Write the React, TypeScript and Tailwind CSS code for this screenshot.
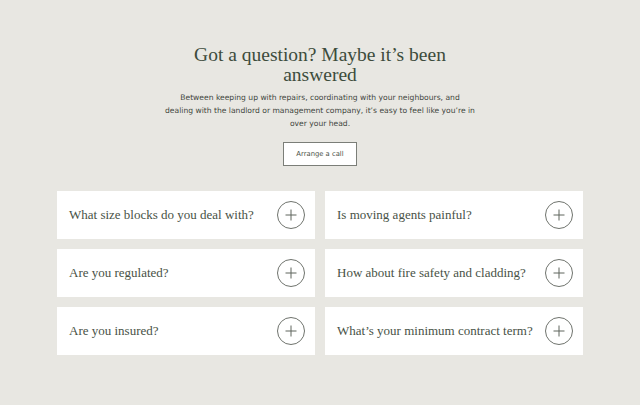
import { FC } from 'react'

const questions = [
  'What size blocks do you deal with?',
  'Is moving agents painful?',
  'Are you regulated?',
  'How about fire safety and cladding?',
  'Are you insured?',
  'What’s your minimum contract term?',
]

/**
 * 開閉ボタン (丸 + プラス)
 */
const PlusCircle: FC = () => (
  <span className="flex h-[28px] w-[28px] shrink-0 items-center justify-center rounded-full border border-[#6f736d]">
    <svg width="12" height="12" viewBox="0 0 12 12" fill="none">
      <path d="M6 0.5V11.5M0.5 6H11.5" stroke="#5f645d" strokeWidth="1" />
    </svg>
  </span>
)

type Props = {
  question: string
}
const FaqCard: FC<Props> = ({ question }) => (
  <div className="flex h-[48px] items-center justify-between bg-white pl-[12px] pr-[10px]">
    <span className="font-['Liberation_Serif',serif] text-[13px] text-[#485246]">
      {question}
    </span>
    <PlusCircle />
  </div>
)

export default function App() {
  return (
    <div className="min-h-[405px] w-full bg-[#e8e7e2] pt-[45px]">
      <div className="mx-auto flex w-[526px] flex-col items-center">
        <h1 className="text-center font-['Liberation_Serif',serif] text-[19.5px] leading-[19.5px] text-[#3d4c3c]">
          Got a question? Maybe it’s been
          <br />
          answered
        </h1>
        <p className="mt-[7px] w-[340px] text-center font-['DejaVu_Sans',sans-serif] text-[7.6px] leading-[13px] text-[#3f463d]">
          Between keeping up with repairs, coordinating with your neighbours, and
          <br />
          dealing with the landlord or management company, it’s easy to feel like you’re in
          <br />
          over your head.
        </p>
        <button className="mt-[12px] flex h-[24px] w-[74px] items-center justify-center border border-[#7b7e78] bg-white font-['DejaVu_Sans',sans-serif] text-[6.8px] text-[#4a5148]">
          Arrange a call
        </button>

        {/* FAQ */}
        <div className="mt-[25px] grid w-full grid-cols-2 gap-[10px]">
          {questions.map((q) => (
            <FaqCard key={q} question={q} />
          ))}
        </div>
      </div>
    </div>
  )
}
